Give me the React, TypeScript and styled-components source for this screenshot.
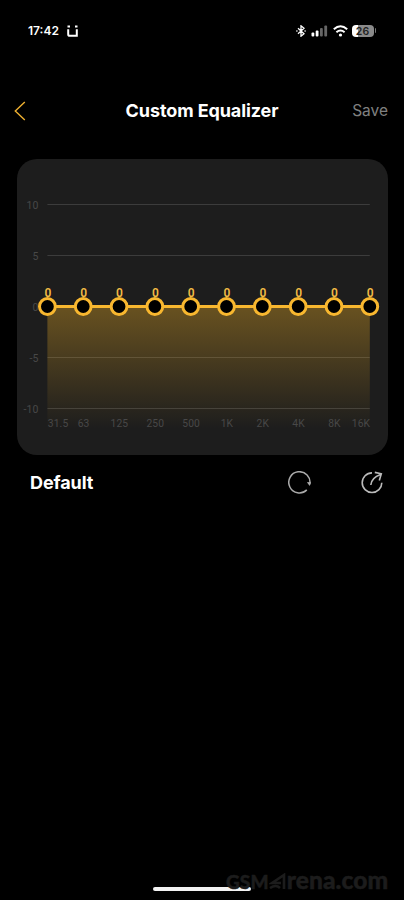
import React from 'react';
import styled, { createGlobalStyle } from 'styled-components';

const GlobalStyle = createGlobalStyle`
  * { box-sizing: border-box; }
  html, body { margin: 0; background: #000; }
  body { font-family: Inter, "Liberation Sans", sans-serif; color: #fff; }
`;

const Screen = styled.div`
  width: 404px;
  height: 900px;
  background: #000;
  display: flex;
  flex-direction: column;
  overflow: hidden;
`;

const StatusBar = styled.div`
  height: 61px;
  padding: 0 28px;
  display: flex;
  align-items: center;
  justify-content: space-between;
`;

const StatusGroup = styled.div<{ $gap: number }>`
  display: flex;
  align-items: center;
  gap: ${(p) => p.$gap}px;
`;

const Clock = styled.span`
  font-size: 12px;
  font-weight: 600;
  line-height: 16px;
`;

const Battery = styled.div`
  display: flex;
  align-items: center;
  gap: 1px;
  margin-left: -1px;
`;

const BatteryBody = styled.div<{ $level: number }>`
  width: 22px;
  height: 12px;
  border-radius: 4px;
  background: linear-gradient(90deg, #fff ${(p) => p.$level}%, #8a8a8a ${(p) => p.$level}%);
  color: #222;
  font-size: 10.5px;
  font-weight: 600;
  line-height: 13px;
  text-align: center;
`;

const BatteryTip = styled.div`
  width: 1.5px;
  height: 5px;
  border-radius: 0 2px 2px 0;
  background: #777;
`;

const Header = styled.header`
  height: 98px;
  padding: 1px 16px 0 14px;
  display: grid;
  grid-template-columns: 60px 1fr 58px;
  align-items: center;
`;

const BackButton = styled.button`
  display: flex;
  padding: 0;
  border: 0;
  background: none;
`;

const Title = styled.h1`
  margin: 0;
  font-size: 18px;
  font-weight: 700;
  line-height: 24px;
  letter-spacing: -0.1px;
  text-align: center;
  white-space: nowrap;
`;

const SaveButton = styled.button`
  padding: 0;
  border: 0;
  background: none;
  color: #808080;
  font: 400 15.5px/24px Inter, sans-serif;
  text-align: right;
`;

const Card = styled.section`
  width: 371px;
  height: 296px;
  margin-left: 16.5px;
  border-radius: 20px;
  background: #1d1d1d;
  overflow: hidden;
  flex: none;
`;

const Chart = styled.svg`
  display: block;
  font-family: Roboto, sans-serif;
`;

const PresetRow = styled.div`
  height: 55px;
  padding: 0 20.5px 0 30px;
  display: flex;
  align-items: center;
  justify-content: space-between;
`;

const PresetName = styled.span`
  font-size: 18px;
  font-weight: 700;
  line-height: 24px;
  letter-spacing: -0.1px;
`;

const Actions = styled.div`
  display: flex;
  gap: 48px;
`;

const IconButton = styled.button`
  display: flex;
  padding: 0;
  border: 0;
  background: none;
`;

const Spacer = styled.div`
  flex: 1;
`;

const BottomBar = styled.footer`
  height: 40px;
  display: grid;
  justify-content: start;
`;

const HomeIndicator = styled.div`
  grid-area: 1 / 1;
  width: 98px;
  height: 4px;
  margin: 27px 0 0 153px;
  border-radius: 2px;
  background: #f3f3f3;
`;

const Watermark = styled.div`
  grid-area: 1 / 1;
  display: flex;
  align-items: baseline;
  margin: 4px 0 0 226px;
  height: 32px;
  color: #1c1c1c;
  -webkit-text-stroke: 0.5px #1c1c1c;
  font: 900 24.5px/32px Lato, sans-serif;
  letter-spacing: 0.1px;
  white-space: nowrap;
`;

const WatermarkCaps = styled.span`
  font-size: 19px;
`;

const BANDS = ['31.5', '63', '125', '250', '500', '1K', '2K', '4K', '8K', '16K'];
const LEVELS = [10, 5, 0, -5, -10];
const LEFT = 30.4;
const RIGHT = 352.8;
const ZERO = 147.5;
const STEP = (RIGHT - LEFT) / (BANDS.length - 1);

function labelAnchor(i: number) {
  if (i === 0) return 'start';
  return i === BANDS.length - 1 ? 'end' : 'middle';
}

function EqualizerChart() {
  return (
    <Chart width="371" height="296" viewBox="0 0 371 296">
      <defs>
        <linearGradient id="fill" x1="0" y1="0" x2="0" y2="1">
          <stop offset="0" stopColor="#fbb826" stopOpacity="0.34" />
          <stop offset="1" stopColor="#fbb826" stopOpacity="0" />
        </linearGradient>
      </defs>
      {LEVELS.map((v) => (
        <g key={v}>
          <line x1={LEFT} x2={RIGHT} y1={ZERO - v * 10.2} y2={ZERO - v * 10.2} stroke="#3c3c3c" />
          <text x="21.3" y={ZERO - v * 10.2 + 4.3} textAnchor="end" fontSize="10.5" fill="#484848">{v}</text>
        </g>
      ))}
      <rect x={LEFT} y={ZERO} width={RIGHT - LEFT} height="122" fill="url(#fill)" />
      {BANDS.map((b, i) => (
        <text key={b} x={LEFT + i * STEP + 0.4} y="268" textAnchor={labelAnchor(i)} fontSize="10.3" letterSpacing="0.1" fill="#484848">{b}</text>
      ))}
      <line x1={LEFT} x2={RIGHT} y1={ZERO} y2={ZERO} stroke="#f8b72f" strokeWidth="3" />
      {BANDS.map((b, i) => (
        <g key={b}>
          <circle cx={LEFT + i * STEP} cy={ZERO} r="7.9" fill="#000" stroke="#f8b72f" strokeWidth="3" />
          <text x={LEFT + i * STEP + 0.5} y="137.8" textAnchor="middle" fontSize="12" fontWeight="600" fill="#f2bb45">0</text>
        </g>
      ))}
    </Chart>
  );
}

export default function App() {
  return (
    <>
      <GlobalStyle />
      <Screen>
        <StatusBar>
          <StatusGroup $gap={8}>
            <Clock>17:42</Clock>
            <svg width="11" height="12" viewBox="0 0 11 12" fill="none" stroke="#fff">
              <path d="M.5 1.5h2.5M8 1.5h2.5" strokeWidth="1.8" />
              <path d="M1.2 4.2v5q0 1.6 1.6 1.6h4.7M6.5 10.8h3.3V4.2" strokeWidth="2" />
            </svg>
          </StatusGroup>
          <StatusGroup $gap={5}>
            <svg width="10" height="12" viewBox="0 0 10 12" fill="none" stroke="#fff" strokeWidth="1.3">
              <path d="m2 3.2 6 5.6-3 2.4V.8l3 2.4-6 5.6M.3 6h1.2M8.5 6h1.2" />
            </svg>
            <svg width="17" height="12" viewBox="0 0 16 12">
              <rect x="0" y="7.5" width="2.8" height="4" rx="1" fill="#fff" />
              <rect x="4.2" y="5.5" width="2.8" height="6" rx="1" fill="#fff" />
              <rect x="8.5" y="3" width="2.8" height="8.5" rx="1" fill="#666" />
              <rect x="12.8" y="0.5" width="2.8" height="11" rx="1" fill="#666" />
            </svg>
            <svg width="15" height="12" viewBox="0 0 15 12" fill="none" stroke="#fff" strokeWidth="2">
              <path d="M.8 4.2Q7.5-1.7 14.2 4.2M3.4 7.2q4.1-3.4 8.2 0" />
              <circle cx="7.5" cy="10" r="1.6" fill="#fff" stroke="none" />
            </svg>
            <Battery>
              <BatteryBody $level={27}>26</BatteryBody>
              <BatteryTip />
            </Battery>
          </StatusGroup>
        </StatusBar>
        <Header>
          <BackButton aria-label="Back">
            <svg width="12" height="20" viewBox="0 0 12 20" fill="none" stroke="#eeb030" strokeWidth="1.4">
              <path d="M10.8 1 1.3 10l9.5 9" />
            </svg>
          </BackButton>
          <Title>Custom Equalizer</Title>
          <SaveButton>Save</SaveButton>
        </Header>
        <Card>
          <EqualizerChart />
        </Card>
        <PresetRow>
          <PresetName>Default</PresetName>
          <Actions>
            <IconButton aria-label="Reset">
              <svg width="24" height="24" viewBox="0.5 0.5 24 24" fill="none" stroke="#aaa" strokeWidth="1.5">
                <path d="M19.3 19.4A10.6 10.6 0 1 1 22.3 13.8" />
                <path d="m19.4 11.8 2.8 3.6 1.2-3.8z" fill="#aaa" stroke="none" />
              </svg>
            </IconButton>
            <IconButton aria-label="Share">
              <svg width="24" height="24" viewBox="0 0.3 24 24" fill="none" stroke="#bbb" strokeWidth="1.6">
                <path d="M12 2.2A9.8 9.8 0 1 0 21.8 12" />
                <path d="M10.8 14.3Q11.5 7 20.5 3.8M14.8 1.7l6.5 1.4-2 6.7" />
              </svg>
            </IconButton>
          </Actions>
        </PresetRow>
        <Spacer />
        <BottomBar>
          <HomeIndicator />
          <Watermark>
            <WatermarkCaps>GSM</WatermarkCaps>
            <svg width="18" height="16" viewBox="0 0 18 16" fill="none" stroke="#1c1c1c" strokeWidth="2.6">
              <path d="M15 16V2L3 10h9M1 15q6-4 10 0" />
            </svg>
            <span>rena.com</span>
          </Watermark>
        </BottomBar>
      </Screen>
    </>
  );
}
